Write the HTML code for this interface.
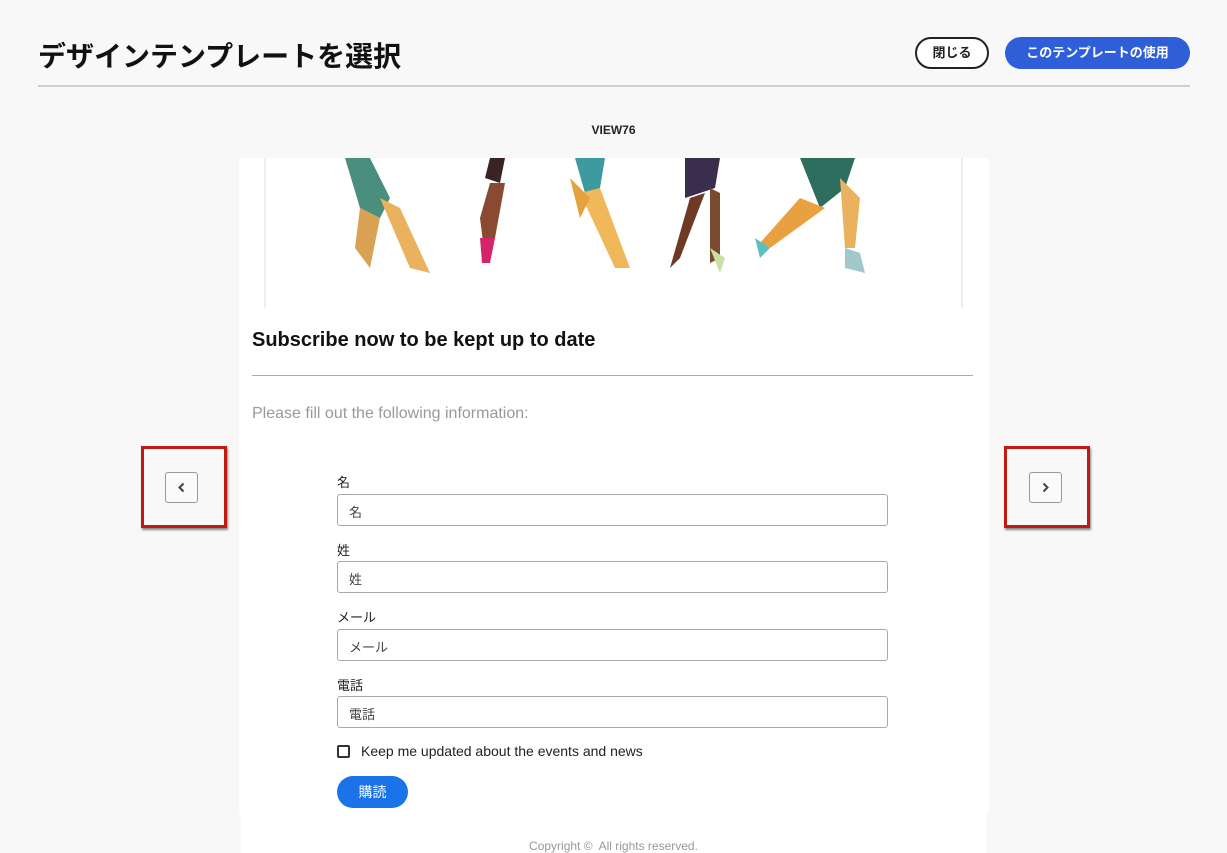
<!DOCTYPE html>
<html><head><meta charset="utf-8"><style>
body{margin:0;width:1227px;height:853px;background:#f8f8f8;font-family:"Liberation Sans","Noto Sans CJK JP",sans-serif;position:relative;overflow:hidden}
.a{position:absolute}
h1{position:absolute;left:38px;top:35px;margin:0;font-size:28px;font-weight:bold;color:#111}
.hr{left:38px;top:85px;width:1152px;height:2px;background:#d0d0d0}
.btn{border-radius:16px;height:32px;line-height:31px;font-size:13px;font-weight:bold;box-sizing:border-box;text-align:center}
.card{left:239px;top:158px;width:750px;height:657px;background:#fff;border-radius:4px}
.lbl{position:absolute;left:337px;font-size:13px;color:#222}
.inp{position:absolute;left:337px;width:551px;height:32px;border:1px solid #a8a8a8;border-radius:3px;box-sizing:border-box;font-size:13px;color:#444;padding:7px 11px;background:#fff}
.red{width:80px;height:76px;border:3px solid #c11a0e;box-shadow:1px 2px 2px #888}
.nav{width:33px;height:31px;border:1px solid #999;border-radius:3px;background:#fafafa;box-sizing:border-box}
</style></head><body>
<h1>デザインテンプレートを選択</h1>
<div class="a btn" style="left:915px;top:37px;width:74px;border:2px solid #222;color:#222;background:#fff;line-height:28px">閉じる</div>
<div class="a btn" style="left:1005px;top:37px;width:185px;background:#2f5fd8;color:#fff">このテンプレートの使用</div>
<div class="a hr"></div>
<div class="a" style="left:0;width:1227px;top:123px;text-align:center;font-size:12px;font-weight:bold;color:#222">VIEW76</div>
<div class="a card"></div>
<div class="a" style="left:264px;top:158px;width:2px;height:150px;background:#eee"></div>
<div class="a" style="left:961px;top:158px;width:2px;height:150px;background:#eee"></div>
<svg class="a" style="left:300px;top:158px" width="620" height="150">
<polygon points="45,0 70,0 90,40 80,60 60,50" fill="#4a8f7d"/><polygon points="60,50 80,60 70,110 55,90" fill="#d9a154"/><polygon points="80,40 100,50 130,115 110,110" fill="#eab25e"/>
<polygon points="190,0 205,0 200,25 185,20" fill="#3b2224"/><polygon points="190,25 205,25 195,80 185,100 180,60" fill="#8a4a32"/><polygon points="180,80 195,80 190,105 182,105" fill="#d5246a"/>
<polygon points="275,0 305,0 300,30 285,35" fill="#3c9aa0"/><polygon points="280,35 300,30 330,110 315,110" fill="#f0b85a"/><polygon points="270,20 290,40 280,60" fill="#e5a040"/>
<polygon points="385,0 420,0 415,30 385,40" fill="#3a2e4e"/><polygon points="390,40 405,35 380,100 370,110" fill="#6e3a24"/><polygon points="410,30 420,35 420,100 410,105" fill="#7a4a30"/><polygon points="410,90 425,100 420,115" fill="#c8e0a0"/>
<polygon points="500,0 555,0 545,30 520,50" fill="#2e6e5e"/><polygon points="500,40 525,50 470,90 460,85" fill="#e8a040"/><polygon points="540,20 560,40 555,90 545,90" fill="#eab25e"/><polygon points="545,90 560,95 565,115 545,110" fill="#a0c8c8"/><polygon points="455,80 470,90 460,100" fill="#5bc0c0"/>
</svg>
<div class="a" style="left:252px;top:329px;font-size:20px;font-weight:bold;color:#111">Subscribe now to be kept up to date</div>
<div class="a" style="left:252px;top:375px;width:721px;height:1px;background:#aaa"></div>
<div class="a" style="left:252px;top:405px;font-size:16px;color:#999">Please fill out the following information:</div>
<div class="lbl" style="top:472px">名</div><div class="inp" style="top:494px">名</div>
<div class="lbl" style="top:540px">姓</div><div class="inp" style="top:561px">姓</div>
<div class="lbl" style="top:607px">メール</div><div class="inp" style="top:629px">メール</div>
<div class="lbl" style="top:675px">電話</div><div class="inp" style="top:696px">電話</div>
<div class="a" style="left:337px;top:745px;width:13px;height:13px;border:2px solid #333;box-sizing:border-box;border-radius:2px"></div>
<div class="a" style="left:361px;top:743px;font-size:14px;color:#222">Keep me updated about the events and news</div>
<div class="a" style="left:337px;top:776px;width:71px;height:32px;border-radius:16px;background:#1a73e8;color:#fff;font-size:14px;text-align:center;line-height:32px">購読</div>
<div class="a" style="left:241px;top:815px;width:745px;height:38px;background:#fff"></div>
<div class="a" style="left:0;width:1227px;top:839px;text-align:center;font-size:12px;color:#999">Copyright ©&nbsp; All rights reserved.</div>
<div class="a red" style="left:141px;top:446px"></div>
<div class="a nav" style="left:165px;top:472px"><svg width="31" height="29"><path d="M17.5 10.5 L13.5 14.5 L17.5 18.5" fill="none" stroke="#444" stroke-width="2"/></svg></div>
<div class="a red" style="left:1004px;top:446px"></div>
<div class="a nav" style="left:1029px;top:472px"><svg width="31" height="29"><path d="M13.5 10.5 L17.5 14.5 L13.5 18.5" fill="none" stroke="#444" stroke-width="2"/></svg></div>
</body></html>
